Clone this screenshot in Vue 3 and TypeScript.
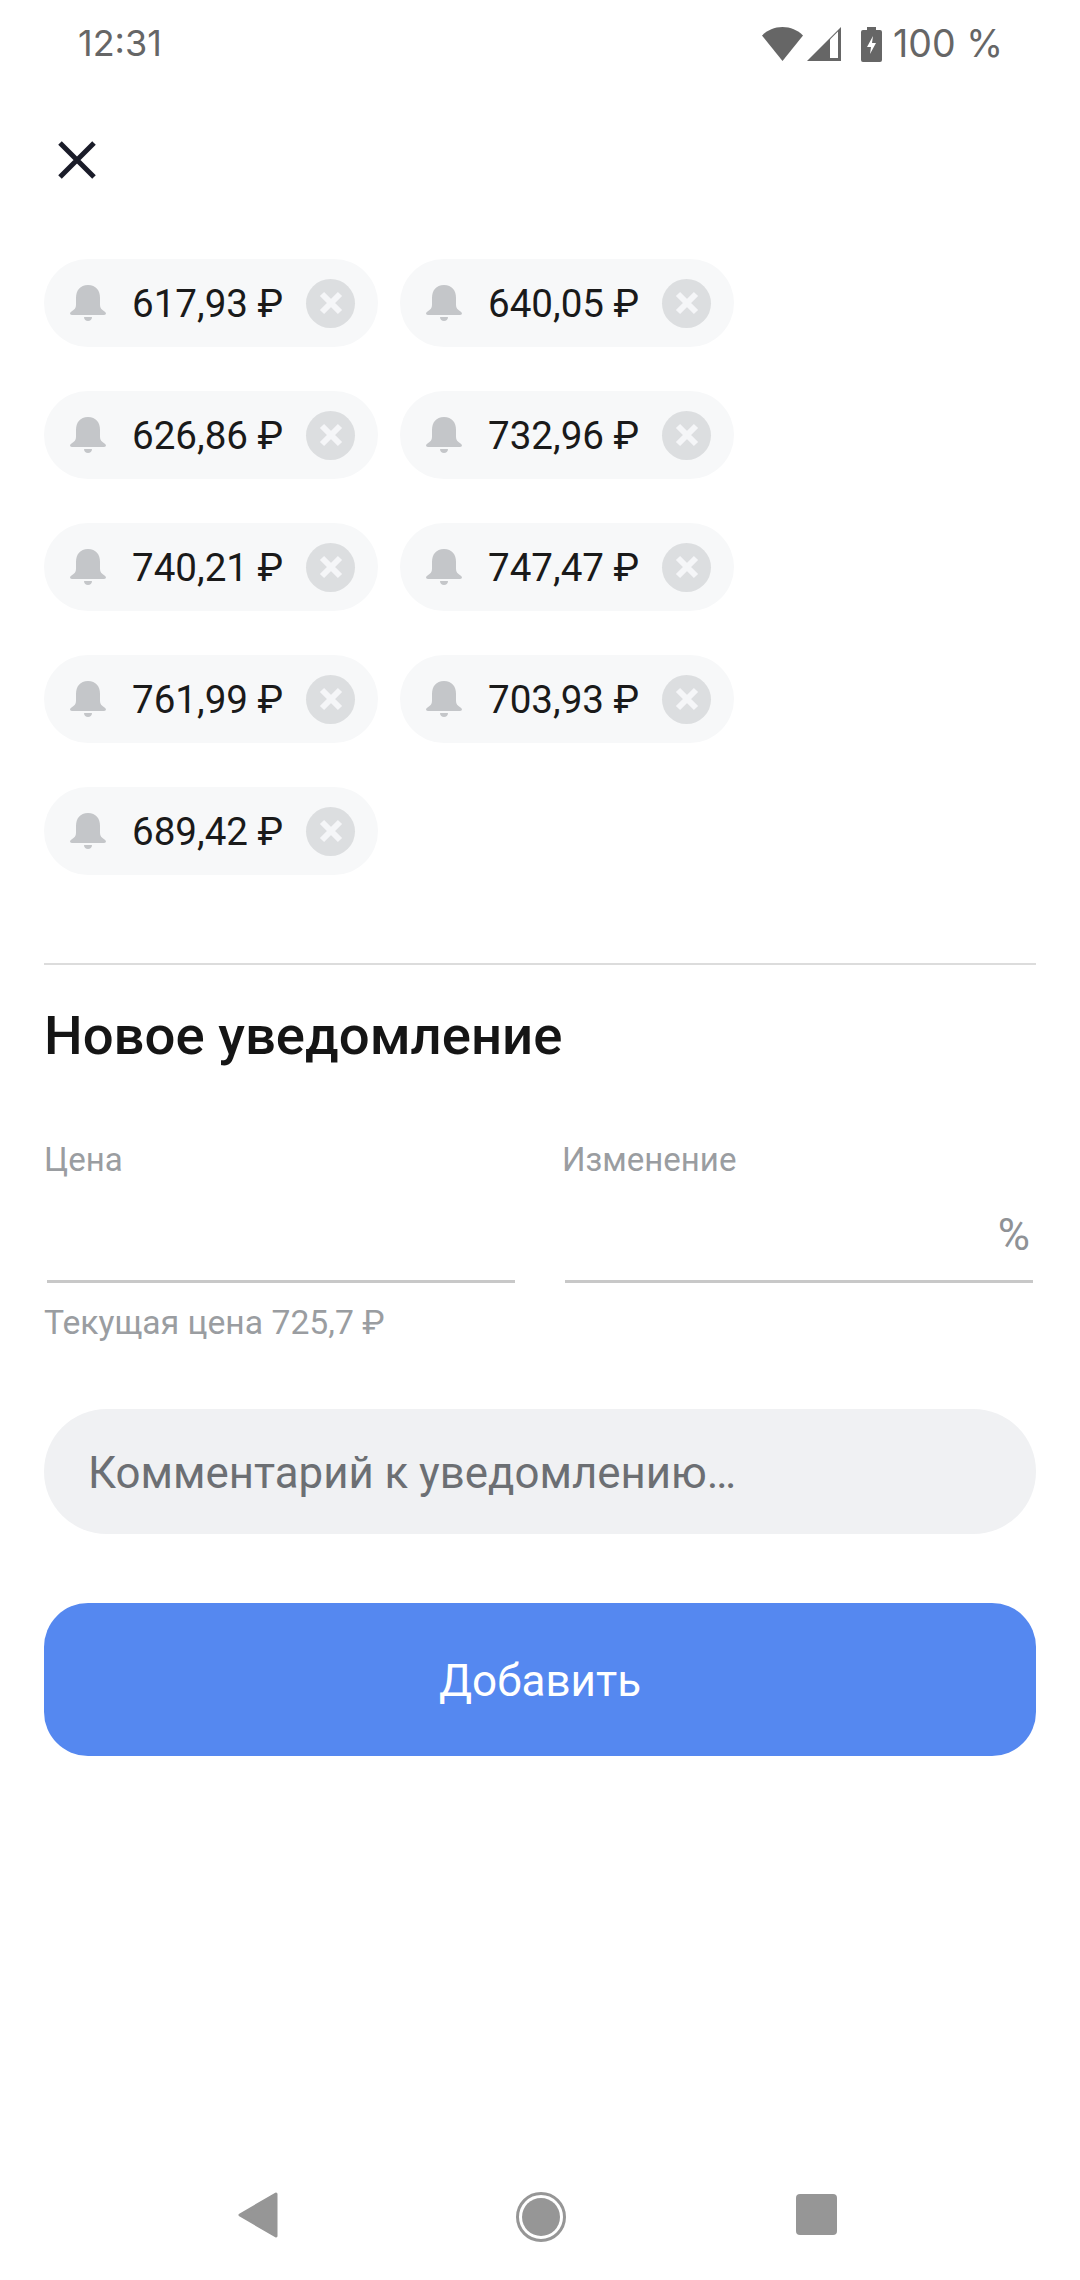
<template>
  <div class="screen">
    <div class="status-bar">
      <span class="status-text">12:31</span>
      <div class="status-right">
        <svg class="wifi" width="41" height="34" viewBox="0 0 41 34">
          <path d="M0 8.500C5.500 3 12.500 0 20.500 0S35.500 3 41 8.500L20.500 34Z" fill="#666"/>
        </svg>
        <svg class="signal" width="34" height="34" viewBox="0 0 34 34">
          <path d="M0 34 34 0V34Z" fill="#666"/>
          <path d="M23 12.500 31 4.500V31H23Z" fill="#fff"/>
        </svg>
        <svg class="battery" width="21" height="35" viewBox="0 0 21 35">
          <path d="M6 0h9v3h4a2 2 0 0 1 2 2v28a2 2 0 0 1-2 2H2a2 2 0 0 1-2-2V5a2 2 0 0 1 2-2h4Z" fill="#666"/>
          <path d="M12 9 6 20h4l-1 7 6-11h-4Z" fill="#fff"/>
        </svg>
        <span class="status-text battery-level">100 %</span>
      </div>
    </div>

    <button class="close-btn" type="button" aria-label="Закрыть">
      <svg width="38" height="38" viewBox="0 0 38 38">
        <path d="M2 2 36 36M36 2 2 36" stroke="#1a1c29" stroke-width="5" fill="none"/>
      </svg>
    </button>

    <div class="chips">
      <div v-for="price in prices" :key="price" class="chip">
        <svg class="bell" width="36" height="36" viewBox="0 0 36 36">
          <path d="M18 0c8 0 12 5.500 12 13v7c0 3 1.500 4.500 4.500 6.500 2 1.300 2 3.500-.5 3.500H2c-2.500 0-2.500-2.200-.5-3.500C4.500 24.500 6 23 6 20v-7C6 5.500 10 0 18 0Z" fill="#c4c6c9"/>
          <path d="M14 32h8c0 2.500-1.800 4-4 4s-4-1.500-4-4Z" fill="#c4c6c9"/>
        </svg>
        <span class="chip-price">{{ price }} ₽</span>
        <span class="chip-remove">
          <svg width="24" height="24" viewBox="0 0 24 24">
            <path d="M3 3 21 21M21 3 3 21" stroke="#f5f6f8" stroke-width="6" fill="none"/>
          </svg>
        </span>
      </div>
    </div>

    <div class="form">
      <h2 class="form-title">Новое уведомление</h2>
      <div class="fields">
        <div class="field">
          <div class="field-label">Цена</div>
          <div class="field-input"></div>
        </div>
        <div class="field">
          <div class="field-label">Изменение</div>
          <div class="field-input"><span class="field-unit">%</span></div>
        </div>
      </div>
      <div class="hint">Текущая цена 725,7 ₽</div>
      <div class="comment">Комментарий к уведомлению…</div>
      <button class="submit" type="button">Добавить</button>
    </div>

    <div class="nav-bar">
      <svg width="40" height="46" viewBox="0 0 40 46">
        <path d="M38 2 2 23 38 44Z" fill="#969696" stroke="#969696" stroke-width="3" stroke-linejoin="round"/>
      </svg>
      <svg width="50" height="50" viewBox="0 0 50 50">
        <circle cx="25" cy="25" r="23.500" fill="none" stroke="#969696" stroke-width="3"/>
        <circle cx="25" cy="25" r="19" fill="#969696"/>
      </svg>
      <span class="nav-square"></span>
    </div>
  </div>
</template>

<script setup lang="ts">
const prices: string[] = [
  '617,93',
  '640,05',
  '626,86',
  '732,96',
  '740,21',
  '747,47',
  '761,99',
  '703,93',
  '689,42',
]
</script>

<style>
body {
  background: #fff;
}
</style>

<style scoped>
.screen {
  width: 1080px;
  height: 2280px;
  display: flex;
  flex-direction: column;
  background: #fff;
  font-family: Roboto, "Liberation Sans", sans-serif;
  overflow: hidden;
}

.status-bar {
  height: 84px;
  box-sizing: border-box;
  padding: 22px 77px 0 78px;
  display: flex;
  justify-content: space-between;
  align-items: flex-start;
}

.status-text {
  font-family: Inter, Roboto, sans-serif;
  font-size: 36px;
  line-height: 42px;
  color: #666;
}

.battery-level {
  font-size: 37.500px;
}

.status-right {
  display: flex;
  align-items: center;
  margin-top: 1px;
}

.signal {
  margin-left: 4px;
}

.battery {
  margin-left: 20px;
  margin-right: 11px;
}

.close-btn {
  align-self: flex-start;
  margin: 57px 0 0 58px;
  padding: 0;
  width: 38px;
  height: 38px;
  background: none;
  border: none;
  display: block;
}

.close-btn svg {
  display: block;
}

.chips {
  margin: 80px 0 0 44px;
  width: 720px;
  display: flex;
  flex-wrap: wrap;
  gap: 44px 22px;
}

.chip {
  width: 334px;
  height: 88px;
  box-sizing: border-box;
  padding: 0 23px 0 26px;
  border-radius: 44px;
  background: #f7f8f9;
  display: flex;
  align-items: center;
}

.chip-price {
  margin-left: 26px;
  font-size: 38.600px;
  color: #1a1a1a;
  white-space: nowrap;
  flex: 1;
}

.chip-remove {
  width: 49px;
  height: 49px;
  border-radius: 50%;
  background: #dcdee0;
  display: flex;
  align-items: center;
  justify-content: center;
}

.form {
  margin: 88px 44px 0;
  border-top: 2px solid #dcdcdc;
}

.form-title {
  margin: 39px 0 0;
  font-size: 54.500px;
  line-height: 62px;
  font-weight: 500;
  color: #151515;
}

.fields {
  margin-top: 74px;
  display: flex;
  gap: 44px;
}

.field {
  flex: none;
  width: 474px;
}

.field-label {
  font-size: 33px;
  line-height: 40px;
  color: #9a9da1;
}

.field-input {
  margin: 16px 3px 0;
  height: 72px;
  padding-bottom: 12px;
  padding-top: 0;
  border-bottom: 3px solid #c8c8c8;
  display: flex;
  align-items: flex-end;
  justify-content: flex-end;
}

.field-unit {
  font-size: 44px;
  line-height: 52px;
  color: #8f9296;
  margin-right: 3px;
  margin-bottom: 7px;
}

.hint {
  margin-top: 20px;
  font-size: 33.700px;
  line-height: 40px;
  color: #9a9da1;
}

.comment {
  margin-top: 66px;
  height: 125px;
  box-sizing: border-box;
  padding: 3px 0 0 44px;
  border-radius: 63px;
  background: #f0f1f3;
  display: flex;
  align-items: center;
  font-size: 43.800px;
  color: #6c6f73;
}

.submit {
  margin-top: 69px;
  width: 100%;
  height: 153px;
  padding: 2px 0 0;
  border: none;
  border-radius: 44px;
  background: #5588f0;
  color: #fff;
  font-family: inherit;
  font-size: 44px;
}

.nav-bar {
  margin-top: auto;
  height: 88px;
  box-sizing: border-box;
  padding-left: 238px;
  display: flex;
  gap: 238px;
  align-items: flex-start;
}

.nav-square {
  width: 41px;
  height: 41px;
  margin-top: 2px;
  margin-left: -8px;
  border-radius: 4px;
  background: #969696;
}
</style>
